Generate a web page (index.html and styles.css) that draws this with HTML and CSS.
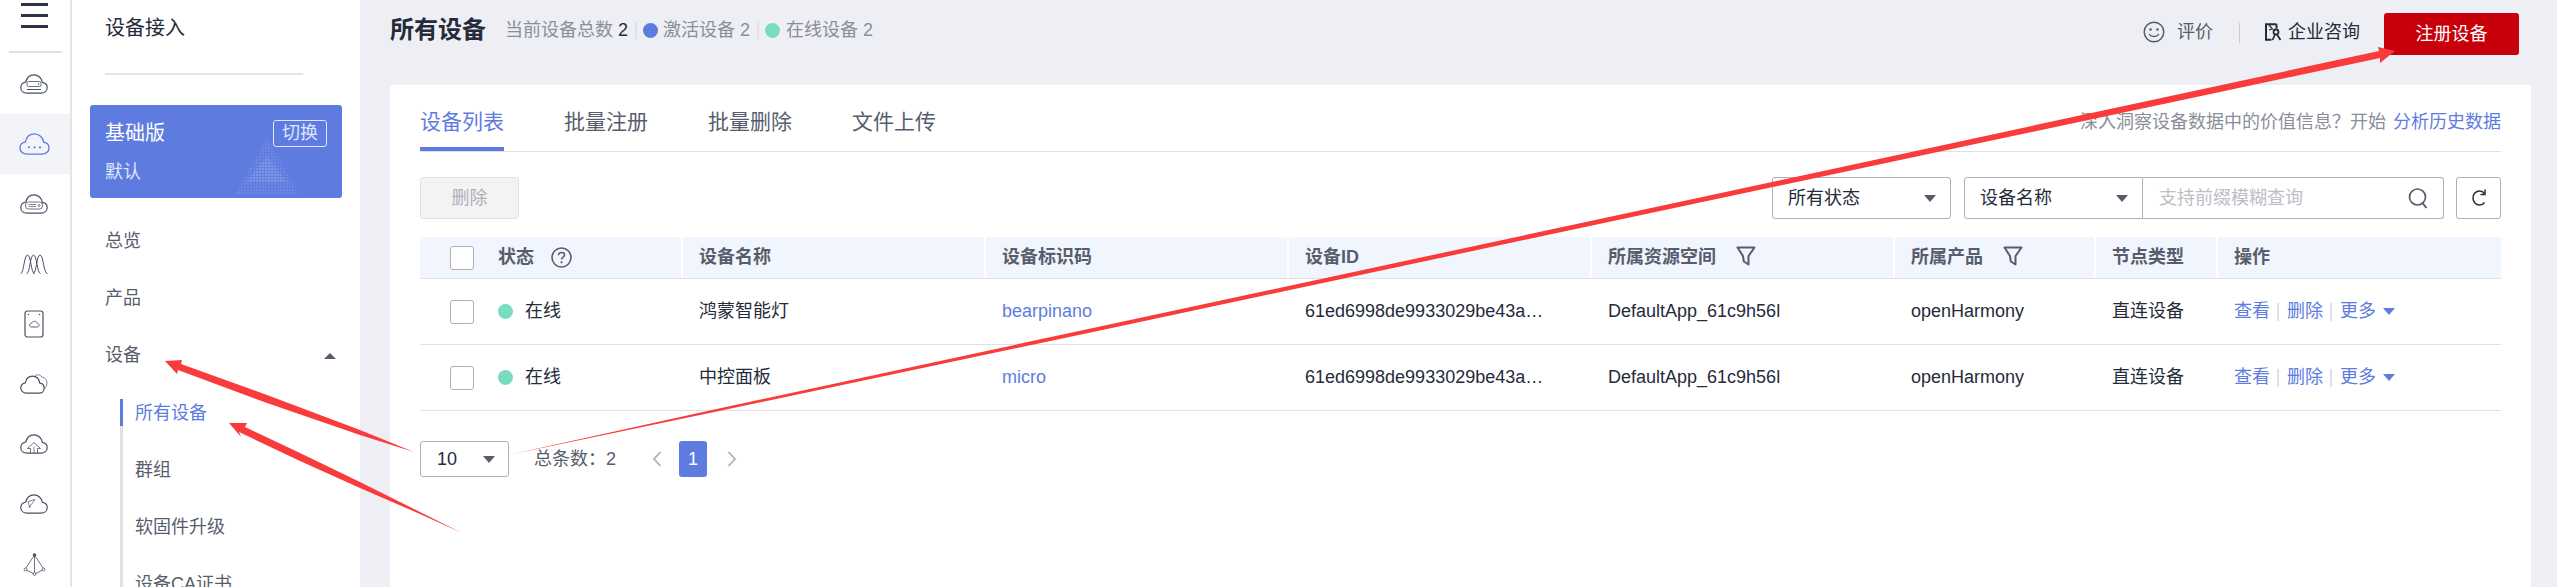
FILE: index.html
```html
<!DOCTYPE html>
<html lang="zh-CN">
<head>
<meta charset="utf-8">
<title>所有设备</title>
<link rel="stylesheet" href="styles.css">
</head>
<body>
<svg class="defs" width="0" height="0" aria-hidden="true">
  <symbol id="cloud" viewBox="0 0 28 20">
    <path d="M7 19.2H21C24.6 19.2 27.2 16.8 27.2 13.6C27.2 10.8 25.2 8.8 22.4 8.4C21.6 4 18.2 .8 14 .8C10.2 .8 6.8 3.4 5.8 8C2.8 8.6 .8 10.8 .8 13.6C.8 16.8 3.4 19.2 7 19.2Z" fill="none" stroke="currentColor" stroke-width="1.2"/>
  </symbol>
  <symbol id="funnel" viewBox="0 0 20 20">
    <path d="M1.5 1.5H18.5L12.5 10V18.5L7.8 15.5L7 10Z" fill="none" stroke="currentColor" stroke-width="2" stroke-linejoin="round"/>
  </symbol>
</svg>
<div class="app">
  <nav class="rail">
    <div class="burger"><i></i><i></i><i></i></div>
    <div class="rail-rule"></div>
    <div class="rail-item">
      <svg class="ri" viewBox="0 0 28 20"><use href="#cloud"/><rect x="7" y="7.5" width="14" height="5" rx="1.5" fill="none" stroke="currentColor" stroke-width=".8"/><circle cx="18.6" cy="10" r=".8" fill="currentColor"/><path d="M7 15.5H21" stroke="currentColor"/></svg>
    </div>
    <div class="rail-item active">
      <svg class="ri big" viewBox="0 0 28 20"><use href="#cloud"/><circle cx="9" cy="13" r="1" fill="currentColor"/><circle cx="14" cy="13" r="1" fill="currentColor"/><circle cx="19" cy="13" r="1" fill="currentColor"/></svg>
    </div>
    <div class="rail-item">
      <svg class="ri" viewBox="0 0 28 20"><use href="#cloud"/><rect x="5.500" y="8" width="17" height="7" rx="3" fill="none" stroke="currentColor" stroke-width=".8"/><path d="M8.500 10.500H16M8.500 12.500H16" stroke="currentColor" stroke-width=".7"/><circle cx="19" cy="11.500" r="1" fill="none" stroke="currentColor" stroke-width=".7"/></svg>
    </div>
    <div class="rail-item">
      <svg class="ri" viewBox="0 0 28 20"><g fill="none" stroke="currentColor" stroke-width="1"><path d="M.5 19.500C4 19.500 4 1 7.500 1C11 1 11 19.500 14.500 19.500"/><path d="M6.500 19.500C10 19.500 10 1 13.500 1C17 1 17 19.500 20.500 19.500"/><path d="M13 19.500C16.500 19.500 16.500 1 20 1C23.500 1 23.500 19.500 27.500 19.500"/></g></svg>
    </div>
    <div class="rail-item">
      <svg class="ri tall" viewBox="0 0 20 28"><rect x="1" y="1" width="18" height="26" rx="2.500" fill="none" stroke="currentColor" stroke-width="1.200"/><circle cx="4.500" cy="4.500" r=".8" fill="currentColor"/><circle cx="15.500" cy="4.500" r=".8" fill="currentColor"/><path d="M7.500 17H13C14.300 17 15 16 15 15.100C15 14.100 14.200 13.400 13.300 13.300C12.900 12 11.800 11.300 10.400 11.300C9 11.300 8 12.100 7.500 13.400C6.400 13.600 5.500 14.200 5.500 15.200C5.500 16.200 6.300 17 7.500 17Z" fill="none" stroke="currentColor" stroke-width=".9"/></svg>
    </div>
    <div class="rail-item">
      <svg class="ri" viewBox="0 0 28 20"><path d="M15 1.500C17 .3 20 .5 22 3C24.500 3.200 27 5.500 27 9C27 12 25.500 14 23.500 15" fill="none" stroke="currentColor" stroke-width=".7"/><path d="M6.500 19.200H19C22 19.200 24.200 17 24.200 14.300C24.200 11.500 22.200 9.500 19.800 9.200C19 5 16 2.200 12.500 2.200C9 2.200 6.200 4.500 5.300 8.800C2.600 9.300 .8 11.300 .8 14C.8 16.800 3.200 19.200 6.500 19.200Z" fill="none" stroke="currentColor" stroke-width="1.200"/></svg>
    </div>
    <div class="rail-item">
      <svg class="ri" viewBox="0 0 28 20"><use href="#cloud"/><path d="M10.500 19V14.500H7.500L14 8.500L20.500 14.500H17.500V19" fill="none" stroke="currentColor" stroke-width=".8"/><path d="M14 13V19" stroke="currentColor" stroke-width=".7"/></svg>
    </div>
    <div class="rail-item">
      <svg class="ri" viewBox="0 0 28 20"><use href="#cloud"/><path d="M8 7.500L15 5.500L9.500 13Z" fill="none" stroke="currentColor" stroke-width=".7"/><circle cx="9.500" cy="13" r=".8" fill="currentColor"/></svg>
    </div>
    <div class="rail-item">
      <svg class="ri peak" viewBox="0 0 23 23"><g fill="none" stroke="currentColor" stroke-width=".8"><path d="M11.500 2L2 16.500L11.500 21L21 16.500Z"/><path d="M11.500 2V21"/><circle cx="2.500" cy="16.500" r="1.400" fill="#fff"/><circle cx="20.500" cy="16.500" r="1.400" fill="#fff"/><circle cx="11.500" cy="21" r="1.400" fill="#fff"/></g><circle cx="11.500" cy="2" r="1.700" fill="currentColor"/></svg>
    </div>
  </nav>

  <aside class="side">
    <div class="side-title">设备接入</div>
    <div class="side-rule"></div>
    <div class="plan">
      <div class="plan-top"><span class="plan-name">基础版</span><span class="plan-switch">切换</span></div>
      <div class="plan-sub">默认</div>
      <svg class="plan-art" viewBox="0 0 64 57"><defs><pattern id="dots" width="3" height="3" patternUnits="userSpaceOnUse"><rect width="2" height="2" fill="#fff" opacity=".09"/></pattern><pattern id="dots2" width="3" height="3" patternUnits="userSpaceOnUse"><rect width="2.500" height="2.500" fill="#fff" opacity=".11"/></pattern></defs><path d="M32 0L64 57H0Z" fill="url(#dots)"/><path d="M32 18L52 44H12Z" fill="url(#dots2)"/></svg>
    </div>
    <ul class="menu">
      <li class="menu-item">总览</li>
      <li class="menu-item">产品</li>
      <li class="menu-item">设备<i class="tri-up"></i></li>
    </ul>
    <ul class="submenu">
      <li class="sub-item current">所有设备</li>
      <li class="sub-item">群组</li>
      <li class="sub-item">软固件升级</li>
      <li class="sub-item">设备CA证书</li>
    </ul>
  </aside>

  <main class="main">
    <header class="head">
      <div class="head-left">
        <h1 class="page-title">所有设备</h1>
        <div class="stats">
          <span>当前设备总数 <b>2</b></span><i class="stat-sep"></i>
          <i class="dot dot-blue"></i><span>激活设备 2</span><i class="stat-sep"></i>
          <i class="dot dot-green"></i><span>在线设备 2</span>
        </div>
      </div>
      <div class="head-right">
        <svg class="smile" viewBox="0 0 22 22"><g fill="none" stroke="currentColor" stroke-width="1.500"><circle cx="11" cy="11" r="9.800"/><path d="M6.500 13.500C8 16.300 14 16.300 15.500 13.500" stroke-linecap="round"/></g><circle cx="7.500" cy="8.500" r="1.300" fill="currentColor"/><circle cx="14.500" cy="8.500" r="1.300" fill="currentColor"/></svg>
        <span class="rate">评价</span>
        <i class="head-sep"></i>
        <svg class="consult" viewBox="0 0 18 18"><path d="M12.500 1.200H2V16.800H7.500M12.500 1.200V5.500" fill="none" stroke="#252b3a" stroke-width="2"/><path d="M5 2L8.500 6L5 7" fill="none" stroke="#252b3a" stroke-width="1.200"/><circle cx="12" cy="9" r="2.500" fill="none" stroke="#252b3a" stroke-width="1.800"/><path d="M11 11.500L8.500 17M13 11.500L16.500 17" stroke="#252b3a" stroke-width="1.800"/></svg>
        <span class="consult-text">企业咨询</span>
        <button class="btn-primary">注册设备</button>
      </div>
    </header>

    <section class="card">
      <div class="tabs">
        <div class="tab selected">设备列表</div>
        <div class="tab">批量注册</div>
        <div class="tab">批量删除</div>
        <div class="tab">文件上传</div>
        <div class="tabs-note">深入洞察设备数据中的价值信息？开始 <a class="link note-link">分析历史数据</a></div>
      </div>

      <div class="toolbar">
        <button class="btn-disabled">删除</button>
        <div class="filters">
          <div class="select"><span>所有状态</span><i class="tri-down"></i></div>
          <div class="select joined"><span>设备名称</span><i class="tri-down"></i></div>
          <div class="search"><span>支持前缀模糊查询</span>
            <svg class="search-icon" viewBox="0 0 20 22"><circle cx="9.500" cy="10" r="8" fill="none" stroke="#575d6c" stroke-width="1.700"/><path d="M14.500 16L18.500 21" stroke="#575d6c" stroke-width="2"/></svg>
          </div>
          <div class="refresh">
            <svg class="refresh-icon" viewBox="0 0 16 18"><path d="M13.500 4.500C12.300 2.800 10.500 2 8.500 2C4.800 2 2 5 2 9S4.800 16 8.500 16C10.500 16 12.300 15.200 13.500 13.500" fill="none" stroke="#252b3a" stroke-width="1.500"/><path d="M14 .5V5.500H9.500" fill="none" stroke="#252b3a" stroke-width="1.500"/></svg>
          </div>
        </div>
      </div>

      <div class="grid-row grid-head">
        <div class="cell first"><i class="check"></i><span class="status-label">状态</span>
          <svg class="help" viewBox="0 0 21 21"><circle cx="10.500" cy="10.500" r="9.500" fill="none" stroke="#575d6c" stroke-width="1.600"/><path d="M7.500 8.200C7.500 6.400 9 5.500 10.500 5.500C12.200 5.500 13.500 6.500 13.500 8C13.500 10.200 10.500 10 10.500 12.500" fill="none" stroke="#575d6c" stroke-width="1.600"/><circle cx="10.500" cy="15.300" r="1.100" fill="#575d6c"/></svg>
        </div>
        <div class="cell">设备名称</div>
        <div class="cell">设备标识码</div>
        <div class="cell">设备ID</div>
        <div class="cell">所属资源空间<svg class="funnel"><use href="#funnel"/></svg></div>
        <div class="cell">所属产品<svg class="funnel"><use href="#funnel"/></svg></div>
        <div class="cell">节点类型</div>
        <div class="cell last">操作</div>
      </div>
      <div class="grid-row grid-body">
        <div class="cell first"><i class="check"></i><i class="dot row-dot"></i><span>在线</span></div>
        <div class="cell">鸿蒙智能灯</div>
        <div class="cell"><a class="link">bearpinano</a></div>
        <div class="cell">61ed6998de9933029be43a…</div>
        <div class="cell">DefaultApp_61c9h56l</div>
        <div class="cell">openHarmony</div>
        <div class="cell">直连设备</div>
        <div class="cell ops"><a class="link">查看</a><i class="op-sep"></i><a class="link">删除</a><i class="op-sep"></i><a class="link">更多</a><i class="tri-more"></i></div>
      </div>
      <div class="grid-row grid-body">
        <div class="cell first"><i class="check"></i><i class="dot row-dot"></i><span>在线</span></div>
        <div class="cell">中控面板</div>
        <div class="cell"><a class="link">micro</a></div>
        <div class="cell">61ed6998de9933029be43a…</div>
        <div class="cell">DefaultApp_61c9h56l</div>
        <div class="cell">openHarmony</div>
        <div class="cell">直连设备</div>
        <div class="cell ops"><a class="link">查看</a><i class="op-sep"></i><a class="link">删除</a><i class="op-sep"></i><a class="link">更多</a><i class="tri-more"></i></div>
      </div>

      <div class="pager">
        <div class="page-size"><span>10</span><i class="tri-down"></i></div>
        <span class="total">总条数：2</span>
        <svg class="chev" viewBox="0 0 10 16"><path d="M8.500 1L2 8L8.500 15" fill="none" stroke="#adb0b8" stroke-width="1.800"/></svg>
        <span class="page-num">1</span>
        <svg class="chev" viewBox="0 0 10 16"><path d="M1.500 1L8 8L1.500 15" fill="none" stroke="#adb0b8" stroke-width="1.800"/></svg>
      </div>
    </section>
  </main>
</div>
<svg class="arrows" viewBox="0 0 2557 587" aria-hidden="true">
  <polygon points="165,361 182,360 181,364 267,395 360,430 414,452 360,435 267,403 178,370 177,374"/>
  <polygon points="229,423 247,423 245,427 300,453 360,482 420,512 462,533 420,514 360,488 300,461 239,432 241,437"/>
  <polygon points="2395,51 2378,47 2379,51 1700,197.500 1100,326.500 712,410 503,456 712,412.500 1100,330.500 1700,202.500 2380,58 2380,63"/>
</svg>
</body>
</html>
```

FILE: styles.css
```css
* { box-sizing: border-box; }
html, body { margin: 0; height: 587px; overflow: hidden; }
body {
  position: relative;
  font-family: "Liberation Sans", "Noto Sans CJK SC", sans-serif;
  font-size: 18px;
  line-height: 27px;
  color: #252b3a;
  background: #eeeff5;
}
ul { list-style: none; margin: 0; padding: 0; }
i { font-style: normal; display: block; }
a { text-decoration: none; }
.defs { position: absolute; }

.app { display: flex; height: 587px; overflow: hidden; }

/* icon rail */
.rail { flex: 0 0 72px; background: #fff; border-right: 2px solid #e3e4e9; color: #4a5062; }
.burger { height: 51px; padding: 3px 21px 0; }
.burger i { height: 3px; background: #2e3445; margin-bottom: 8px; width: 27px; }
.rail-rule { height: 2px; width: 53px; margin: 0 0 1px 9px; background: #dfe1e6; }
.rail-item { height: 60px; display: flex; align-items: center; justify-content: center; padding-right: 2px; }
.rail-item.active { background: #f3f4f7; color: #5e7ce0; }
.ri { width: 28px; height: 20px; overflow: visible; }
.ri.big { width: 31px; height: 22px; }
.ri.tall { width: 20px; height: 28px; }
.ri.peak { width: 23px; height: 23px; }

/* secondary sidebar */
.side { flex: 0 0 288px; background: #fff; padding: 0 18px; overflow: hidden; }
.side-title { font-size: 20px; line-height: 56px; padding-left: 15px; color: #252b3a; }
.side-rule { height: 2px; width: 198px; margin: 17px 0 0 15px; background: #e3e4e9; }
.plan { position: relative; height: 93px; margin-top: 30px; padding: 15px 15px 0; background: #5e7ce0; border-radius: 3px; color: #fff; }
.plan-top { display: flex; justify-content: space-between; align-items: center; height: 27px; }
.plan-name { font-size: 20px; line-height: 31px; }
.plan-switch { width: 54px; height: 27px; border: 1px solid #dfe5fa; border-radius: 3px; text-align: center; line-height: 25px; color: #dfe5fa; }
.plan-sub { margin-top: 12px; color: #dfe5fa; }
.plan-art { position: absolute; left: 145px; top: 33px; width: 64px; height: 57px; }
.menu { margin-top: 30px; padding-left: 15px; }
.menu-item { display: flex; justify-content: space-between; align-items: center; height: 27px; margin-bottom: 30px; color: #575d6c; padding-right: 6px; }
.tri-up { width: 0; height: 0; border: 6px solid transparent; border-top: 0; border-bottom: 6px solid #575d6c; }
.submenu { margin: 0 0 0 30px; border-left: 3px solid #dfe1e6; }
.sub-item { height: 27px; line-height: 29px; margin: 0 0 30px -3px; padding-left: 12px; border-left: 3px solid transparent; color: #575d6c; }
.sub-item.current { color: #5e7ce0; border-left-color: #5e7ce0; }

/* main */
.main { flex: 1; min-width: 0; padding: 0 26px 0 30px; }
.head { display: flex; justify-content: space-between; height: 85px; }
.head-left { display: flex; align-items: center; height: 60px; }
.page-title { margin: 0; font-size: 24px; line-height: 36px; font-weight: 700; color: #252b3a; }
.stats { display: flex; align-items: center; margin-left: 19px; color: #8a8e99; }
.stats b { font-weight: 400; color: #252b3a; }
.stat-sep { width: 2px; height: 17px; margin: 0 6px 0 7px; background: #dfe1e6; }
.dot { width: 15px; height: 15px; border-radius: 50%; flex: none; }
.dot-blue { background: #5e7ce0; margin-right: 5px; }
.dot-green { background: #7adcbf; margin-right: 6px; }
.row-dot { background: #7adcbf; margin-right: 12px; }
.head-right { display: flex; align-items: flex-start; margin-right: 12px; padding-top: 13px; }
.smile { width: 22px; height: 22px; margin: 8px 12px 0 0; color: #575d6c; }
.rate { margin-top: 6px; color: #575d6c; }
.head-sep { width: 1px; height: 20px; margin: 10px 24px 0 26px; background: #c9ccd4; }
.consult { width: 18px; height: 18px; margin: 10px 6px 0 0; }
.consult-text { margin-top: 6px; color: #252b3a; }
.btn-primary { width: 135px; height: 42px; margin-left: 24px; padding: 0; border: 0; border-radius: 3px; background: #c7000b; color: #fff; font: inherit; }

.card { height: 502px; padding: 0 30px; background: #fff; }
.tabs { display: flex; height: 67px; padding-top: 18px; border-bottom: 1px solid #dfe1e6; }
.tab { height: 48px; margin-right: 60px; padding-bottom: 6px; font-size: 21px; line-height: 38px; color: #575d6c; }
.tab.selected { color: #5e7ce0; border-bottom: 4px solid #5e7ce0; }
.tabs-note { margin-left: auto; height: 38px; line-height: 38px; color: #8a8e99; }
.note-link { margin-left: 2px; }
.link { color: #5e7ce0; }

.toolbar { display: flex; justify-content: space-between; height: 42px; margin-top: 25px; }
.btn-disabled { width: 99px; height: 42px; padding: 0; border: 1px solid #dfe1e6; border-radius: 3px; background: #f3f3f4; color: #adb0b8; font: inherit; }
.filters { display: flex; }
.select { display: flex; justify-content: space-between; align-items: center; width: 179px; height: 42px; padding: 0 14px 0 15px; margin-right: 13px; border: 1px solid #adb0b8; border-radius: 3px; color: #252b3a; }
.select.joined { margin-right: 0; border-radius: 3px 0 0 3px; }
.tri-down { width: 0; height: 0; border: 6px solid transparent; border-bottom: 0; border-top: 7px solid #575d6c; }
.search { display: flex; justify-content: space-between; align-items: center; width: 301px; height: 42px; padding: 0 15px 0 16px; border: 1px solid #adb0b8; border-left: 0; border-radius: 0 3px 3px 0; color: #bbbec5; }
.search-icon { width: 20px; height: 22px; }
.refresh { display: flex; align-items: center; justify-content: center; width: 45px; height: 42px; margin-left: 12px; border: 1px solid #adb0b8; border-radius: 3px; }
.refresh-icon { width: 16px; height: 18px; }

.grid-row { display: grid; grid-template-columns: 263px 303px 303px 303px 303px 201px 122px 1fr; }
.grid-head { height: 42px; margin-top: 18px; border-bottom: 1px solid #dfe1e6; font-weight: 700; color: #575d6c; }
.grid-head .cell { background: #f1f5fd; border-right: 2px solid #fff; }
.grid-head .cell.last { border-right: 0; }
.grid-body { height: 66px; border-bottom: 1px solid #dfe1e6; }
.grid-body:last-of-type { height: 67px; }
.cell { display: flex; align-items: center; padding-left: 16px; white-space: nowrap; overflow: hidden; }
.cell.first { padding-left: 30px; }
.check { width: 24px; height: 24px; margin-right: 24px; flex: none; background: #fff; border: 1px solid #adb0b8; border-radius: 3px; }
.status-label { margin-right: 17px; }
.help { width: 21px; height: 21px; }
.funnel { width: 20px; height: 20px; margin: -3px 0 0 20px; color: #575d6c; }
.op-sep { width: 2px; height: 18px; margin: 0 8px 0 7px; background: #dfe1e6; }
.tri-more { width: 0; height: 0; margin-left: 7px; border: 6px solid transparent; border-bottom: 0; border-top: 7px solid #5e7ce0; }

.pager { display: flex; align-items: center; height: 36px; margin-top: 30px; color: #575d6c; }
.page-size { display: flex; justify-content: space-between; align-items: center; width: 89px; height: 36px; padding: 0 13px 0 16px; border: 1px solid #adb0b8; border-radius: 3px; color: #252b3a; }
.total { margin: 0 36px 0 25px; width: 82px; }
.chev { width: 10px; height: 16px; }
.page-num { width: 28px; height: 36px; margin: 0 20px 0 17px; border-radius: 3px; background: #5e7ce0; color: #fff; text-align: center; line-height: 36px; }

/* annotation arrows drawn over the screenshot */
.arrows { position: absolute; left: 0; top: 0; width: 2557px; height: 587px; pointer-events: none; }
.arrows polygon { fill: #fa3b3b; }
```
